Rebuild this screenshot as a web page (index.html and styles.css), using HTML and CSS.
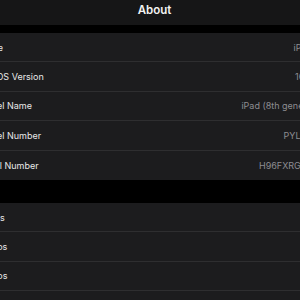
FILE: index.html
```html
<!DOCTYPE html>
<html lang="en">
<head>
  <meta charset="UTF-8">
  <meta name="viewport" content="width=device-width, initial-scale=1.0">
  <title>About</title>
  <link rel="stylesheet" href="styles.css">
</head>
<body>
  <div class="screen">
    <header class="nav-bar">
      <h1>About</h1>
    </header>

    <main>
      <section class="group">
        <div class="row link">
          <span class="label">Name</span>
          <span class="value">iPad
            <svg class="chevron" viewBox="0 0 6 10"><path d="M1 1l4 4-4 4"/></svg>
          </span>
        </div>
        <div class="row link">
          <span class="label">iPadOS Version</span>
          <span class="value">16.6
            <svg class="chevron" viewBox="0 0 6 10"><path d="M1 1l4 4-4 4"/></svg>
          </span>
        </div>
        <div class="row"><span class="label">Model Name</span><span class="value">iPad (8th generation)</span></div>
        <div class="row"><span class="label">Model Number</span><span class="value">PYL92LL/A</span></div>
        <div class="row"><span class="label">Serial Number</span><span class="value">H96FXRGQ2KV3</span></div>
      </section>

      <section class="group">
        <div class="row"><span class="label">Songs</span><span class="value">0</span></div>
        <div class="row"><span class="label">Videos</span><span class="value">12</span></div>
        <div class="row"><span class="label">Photos</span><span class="value">348</span></div>
        <div class="row"><span class="label">Applications</span><span class="value">27</span></div>
      </section>
    </main>
  </div>
</body>
</html>
```

FILE: styles.css
```css
:root {
  --bg: #000000;
  --bar: #161617;
  --cell: #1c1c1e;
  --line: #2e2e30;
  --text: #e8e8e8;
  --muted: #8d8d92;
}

* {
  margin: 0;
  padding: 0;
  box-sizing: border-box;
}

html, body {
  overflow: hidden;
}

body {
  font-family: Inter, 'Noto Sans', sans-serif;
  background-color: var(--bg);
  color: var(--text);
}

/* the screenshot is a crop of a wider screen */
.screen {
  margin: 0 -47px 0 -38px;
}

.nav-bar {
  height: 25px;
  background: var(--bar);
  display: flex;
  align-items: center;
  justify-content: center;
}

.nav-bar h1 {
  font-size: 11.5px;
  font-weight: 600;
  color: #f2f2f2;
  margin-top: -6px;
}

main {
  padding-top: 8px;
}

.group {
  background: var(--cell);
  margin-bottom: 23px;
}

.row {
  height: 29.4px;
  display: flex;
  align-items: center;
  justify-content: space-between;
  padding: 0 16px;
  font-size: 9px;
  border-bottom: 1px solid var(--line);
}

.group .row:last-child {
  border-bottom: none;
}

.label {
  color: var(--text);
}

.value {
  color: var(--muted);
  display: flex;
  align-items: center;
}

.chevron {
  width: 6px;
  height: 10px;
  margin-left: 13px;
  fill: none;
  stroke: #5a5a5e;
  stroke-width: 1.4;
  stroke-linecap: round;
  stroke-linejoin: round;
}
```
